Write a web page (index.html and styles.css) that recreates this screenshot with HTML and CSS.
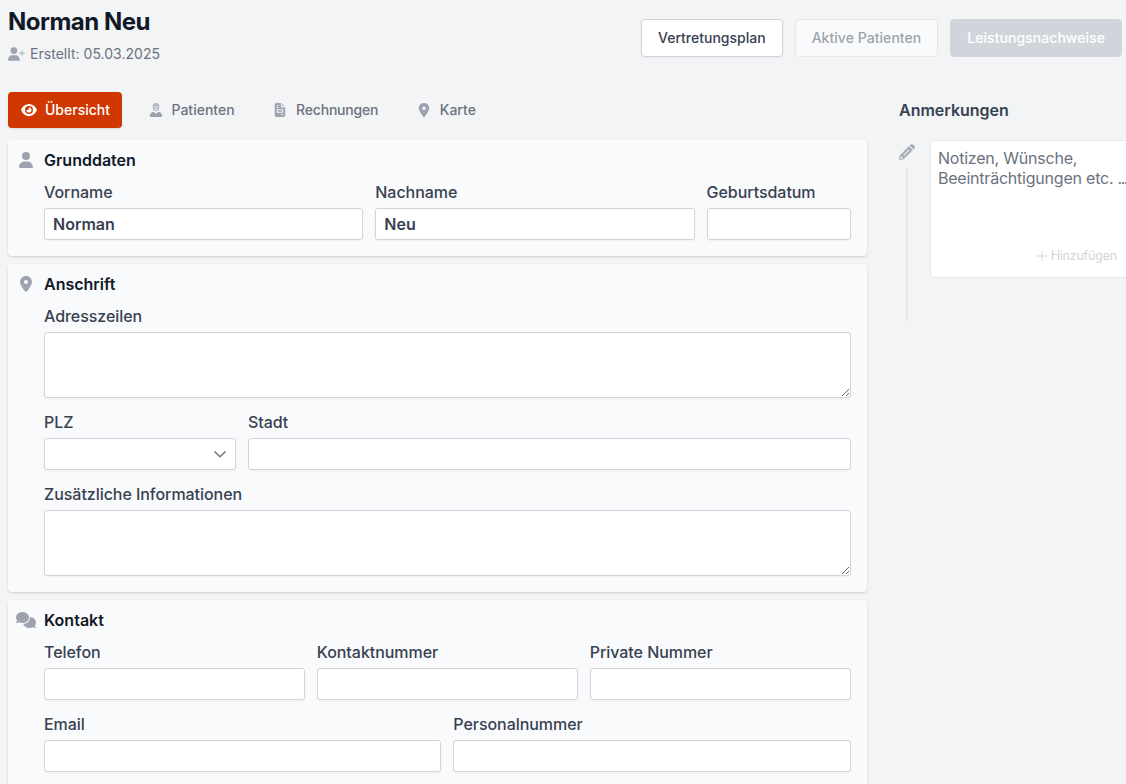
FILE: index.html
```html
<!DOCTYPE html>
<html lang="de">
<head>
  <meta charset="utf-8">
  <title>Norman Neu</title>
  <link rel="stylesheet" href="styles.css">
</head>
<body>

  <header class="header">
    <div>
      <h1>Norman Neu</h1>
      <div class="created">
        <svg width="17" height="14" viewBox="0 0 640 512"><path d="M96 128a128 128 0 1 1 256 0A128 128 0 1 1 96 128zM0 482.300C0 383.800 79.800 304 178.300 304l91.400 0C368.200 304 448 383.800 448 482.300c0 16.400-13.300 29.700-29.700 29.700L29.700 512C13.300 512 0 498.700 0 482.300z"/><path opacity=".7" d="M504 312l0-64-64 0c-13.300 0-24-10.700-24-24s10.700-24 24-24l64 0 0-64c0-13.300 10.700-24 24-24s24 10.700 24 24l0 64 64 0c13.300 0 24 10.700 24 24s-10.700 24-24 24l-64 0 0 64c0 13.300-10.700 24-24 24s-24-10.700-24-24z"/></svg>
        <span>Erstellt: 05.03.2025</span>
      </div>
    </div>
    <div class="actions">
      <button class="btn">Vertretungsplan</button>
      <button class="btn" disabled>Aktive Patienten</button>
      <button class="btn btn-primary" disabled>Leistungsnachweise</button>
    </div>
  </header>

  <div class="layout">
    <main>
      <nav class="tabs">
        <a class="tab active">
          <svg width="16" height="14" viewBox="0 0 576 512"><path d="M288 32c-80.800 0-145.500 36.800-192.600 80.600C48.600 156 17.300 208 2.500 243.700c-3.300 7.900-3.300 16.700 0 24.600C17.300 304 48.600 356 95.400 399.400C142.500 443.200 207.200 480 288 480s145.500-36.800 192.600-80.600c46.800-43.500 78.100-95.400 93-131.100c3.300-7.900 3.300-16.700 0-24.600c-14.900-35.700-46.200-87.700-93-131.100C433.500 68.800 368.800 32 288 32zM144 256a144 144 0 1 1 288 0 144 144 0 1 1-288 0zm144-64c0 35.300-28.700 64-64 64c-7.100 0-13.900-1.200-20.300-3.300c-5.500-1.800-11.900 1.600-11.700 7.400c.3 6.900 1.300 13.800 3.200 20.700c13.700 51.200 66.400 81.600 117.600 67.900s81.600-66.400 67.900-117.600c-11.100-41.500-47.800-69.400-88.600-71.100c-5.800-.2-9.200 6.100-7.400 11.700c2.100 6.400 3.300 13.200 3.300 20.300z"/></svg>
          Übersicht
        </a>
        <a class="tab">
          <svg width="16" height="14" viewBox="0 0 576 512"><g transform="translate(64)"><path opacity=".75" fill-rule="evenodd" d="M104 96C104 36 150 0 224 0s120 36 120 96v64a120 128 0 0 1-240 0zM150 124v32h148v-32zM166 200a58 52 0 0 0 116 0z"/><path d="M130 318l94 78 94-78c80 14 130 76 130 164 0 20-12 30-30 30H30c-18 0-30-10-30-30 0-88 50-150 130-164z"/></g></svg>
          Patienten
        </a>
        <a class="tab invoices">
          <svg width="16" height="14" viewBox="0 0 576 512"><g transform="translate(96)"><path fill-rule="evenodd" d="M64 0C28.700 0 0 28.700 0 64V448c0 35.300 28.700 64 64 64H320c35.300 0 64-28.700 64-64V160H256c-17.700 0-32-14.300-32-32V0H64zM64 80v26h96V80zM64 148v26h96v-26zM72 226v134h240V226zM112 262h160v62H112zM236 410v30h84v-30z"/><path opacity=".5" d="M256 0v128h128z"/></g></svg>
          Rechnungen
        </a>
        <a class="tab">
          <svg width="16" height="14" viewBox="0 0 576 512"><path transform="translate(96)" d="M215.700 499.200C267 435 384 279.400 384 192C384 86 298 0 192 0S0 86 0 192c0 87.400 117 243 168.300 307.200c12.300 15.300 35.100 15.300 47.400 0zM192 128a64 64 0 1 1 0 128 64 64 0 1 1 0-128z"/></svg>
          Karte
        </a>
      </nav>

      <section class="card">
        <svg class="card-icon" width="20" height="16" viewBox="0 0 640 512"><path transform="translate(96)" d="M224 256A128 128 0 1 0 224 0a128 128 0 1 0 0 256zm-45.700 48C79.800 304 0 383.800 0 482.300C0 498.700 13.300 512 29.700 512l388.600 0c16.400 0 29.700-13.300 29.700-29.700C448 383.800 368.200 304 269.700 304l-91.400 0z"/></svg>
        <div class="card-body">
          <h2>Grunddaten</h2>
          <div class="row">
            <label class="field">Vorname <input type="text" value="Norman"></label>
            <label class="field">Nachname <input type="text" value="Neu"></label>
            <label class="field date">Geburtsdatum <input type="text"></label>
          </div>
        </div>
      </section>

      <section class="card">
        <svg class="card-icon" width="20" height="16" viewBox="0 0 640 512"><path transform="translate(128)" d="M215.700 499.200C267 435 384 279.400 384 192C384 86 298 0 192 0S0 86 0 192c0 87.400 117 243 168.300 307.200c12.300 15.300 35.100 15.300 47.400 0zM192 128a64 64 0 1 1 0 128 64 64 0 1 1 0-128z"/></svg>
        <div class="card-body">
          <h2>Anschrift</h2>
          <div class="row">
            <label class="field">Adresszeilen <textarea></textarea></label>
          </div>
          <div class="row">
            <label class="field zip">PLZ
              <span class="select">
                <svg width="14" height="14" viewBox="0 0 14 14"><path d="M1.500 4.500L7 9.700l5.500-5.200"/></svg>
              </span>
            </label>
            <label class="field">Stadt <input type="text"></label>
          </div>
          <div class="row">
            <label class="field">Zusätzliche Informationen <textarea></textarea></label>
          </div>
        </div>
      </section>

      <section class="card">
        <svg class="card-icon" width="20" height="16" viewBox="0 0 640 512"><path d="M208 352c114.900 0 208-78.800 208-176S322.900 0 208 0S0 78.800 0 176c0 38.600 14.700 74.300 39.600 103.400c-3.500 9.400-8.700 17.700-14.200 24.700c-4.800 6.200-9.700 11-13.300 14.300c-1.800 1.600-3.300 2.900-4.300 3.700c-.5 .4-.9 .7-1.100 .8l-.2 .2C1 327.200-1.400 334.400 .8 340.900S9.100 352 16 352c21.800 0 43.800-5.600 62.100-12.500c9.200-3.500 17.800-7.400 25.200-11.400C134.100 343.300 169.800 352 208 352zM448 176c0 112.300-99.100 196.900-216.500 207C255.800 457.400 336.400 512 432 512c38.200 0 73.900-8.700 104.700-23.900c7.500 4 16 7.900 25.200 11.400c18.300 6.900 40.300 12.500 62.100 12.500c6.900 0 13.100-4.500 15.200-11.100c2.100-6.600-.2-13.800-5.800-17.900l-.2-.2c-.2-.2-.6-.4-1.100-.8c-1-.8-2.500-2-4.300-3.700c-3.600-3.300-8.500-8.100-13.300-14.300c-5.500-7-10.700-15.400-14.200-24.700c24.900-29 39.600-64.700 39.600-103.400c0-92.800-84.900-168.900-192.600-175.500c.4 5.100 .6 10.300 .6 15.500z"/></svg>
        <div class="card-body">
          <h2>Kontakt</h2>
          <div class="row">
            <label class="field">Telefon <input type="text"></label>
            <label class="field">Kontaktnummer <input type="text"></label>
            <label class="field">Private Nummer <input type="text"></label>
          </div>
          <div class="row">
            <label class="field">Email <input type="text"></label>
            <label class="field">Personalnummer <input type="text"></label>
          </div>
        </div>
      </section>
    </main>

    <aside class="notes">
      <h3>Anmerkungen</h3>
      <div class="note">
        <div class="timeline">
          <svg width="16" height="16" viewBox="0 0 512 512"><path opacity=".85" fill-rule="evenodd" d="M36 353L322 66l124 124L159 476c-6 6-13 11-21 13L30 511c-18 4-33-11-29-29L22 374c2-8 7-15 14-21zM150 346l20 20 160-160-20-20zM60 400l-16 68 68-16-4-48z"/><path d="M345 43l17-18c25-25 66-25 91 0l34 34c25 25 25 66 0 91l-18 17z"/></svg>
          <div class="line"></div>
        </div>
        <div class="note-box">
          <p>Notizen, Wünsche,<br>Beeinträchtigungen etc. <span class="dots">...</span></p>
          <div class="add">
            <svg width="10" height="10" viewBox="0 0 10 10"><path d="M5 0v10M0 5h10"/></svg>
            Hinzufügen
          </div>
        </div>
      </div>
    </aside>
  </div>

</body>
</html>
```
FILE: styles.css
```css
* {
  box-sizing: border-box;
}

body {
  margin: 0;
  height: 784px;
  padding: 0 4px 0 8px;
  overflow: hidden;
  background: #f3f4f6;
  color: #374151;
  font-family: Inter, sans-serif;
  font-size: 16px;
  line-height: 24px;
}

svg {
  display: block;
  flex-shrink: 0;
  fill: #9ca3af;
}

h1, h2, h3, p {
  margin: 0;
}

h1 {
  font-size: 24px;
  line-height: 32px;
  font-weight: 700;
  letter-spacing: -0.5px;
  color: #111827;
}

/* Header */
.header {
  display: flex;
  justify-content: space-between;
  height: 92px;
  padding-top: 6px;
}

.created {
  display: flex;
  align-items: center;
  gap: 5px;
  margin-top: 6px;
  font-size: 14px;
  line-height: 20px;
  letter-spacing: 0.03px;
  color: #6b7280;
}

.actions {
  display: flex;
  align-items: flex-start;
  gap: 12px;
  padding-top: 13px;
}

.btn {
  height: 38px;
  padding: 0 16px;
  border: 1px solid #d1d5db;
  border-radius: 4px;
  background: white;
  color: #374151;
  font: 500 14px/20px Inter, sans-serif;
  box-shadow: 0 1px 2px rgba(0, 0, 0, 0.05);
}

.btn:disabled {
  border-color: #e5e7eb;
  background: #f9fafb;
  color: #9ca3af;
  letter-spacing: 0.05px;
  box-shadow: none;
}

.btn-primary:disabled {
  border-color: #d1d5db;
  background: #d1d5db;
  color: white;
}

.layout {
  display: flex;
  gap: 32.4px;
}

main {
  width: 858.6px;
  flex-shrink: 0;
}

/* Tabs */
.tabs {
  display: flex;
  gap: 12.5px;
  margin-bottom: 12px;
}

.tab {
  display: flex;
  align-items: center;
  gap: 8px;
  height: 36px;
  padding: 0 12px 0 13px;
  border-radius: 4px;
  font-size: 14px;
  font-weight: 500;
  color: #6b7280;
}

.tab.invoices {
  letter-spacing: -0.2px;
}

.tab.active {
  background: #d03801;
  color: white;
  box-shadow: 0 1px 2px rgba(0, 0, 0, 0.1);
}

.tab.active svg {
  fill: white;
}

/* Cards */
.card {
  display: flex;
  gap: 8px;
  margin-bottom: 8px;
  padding: 8px 16px 16px 8px;
  border-radius: 4px;
  background: #f9fafb;
  box-shadow: 0 1px 3px rgba(0, 0, 0, 0.1), 0 1px 2px rgba(0, 0, 0, 0.06);
}

.card-icon {
  margin-top: 4px;
}

.card-body {
  flex: 1;
}

h2 {
  margin-bottom: 8px;
  font-size: 16px;
  font-weight: 600;
  color: #111827;
}

.row {
  display: flex;
  gap: 12px;
}

.row + .row {
  margin-top: 12px;
}

.field {
  flex: 1 1 0;
  min-width: 0;
  font-weight: 500;
  letter-spacing: -0.05px;
}

.field.date {
  flex: 0 0 144px;
}

.field.zip {
  flex: 0 0 192px;
}

input, textarea, .select {
  display: block;
  width: 100%;
  height: 32px;
  margin-top: 4px;
  padding: 0 8px;
  border: 1px solid #d1d5db;
  border-radius: 3px;
  background: white;
  color: #374151;
  font: 600 16px/24px Inter, sans-serif;
  box-shadow: 0 1px 2px rgba(0, 0, 0, 0.05);
}

textarea {
  height: 66px;
}

.select {
  display: flex;
  align-items: center;
  justify-content: flex-end;
}

.select svg {
  fill: none;
  stroke: #6b7280;
  stroke-width: 1.5;
}

/* Notes */
.notes h3 {
  font-size: 16px;
  line-height: 36px;
  font-weight: 600;
  margin-bottom: 12px;
}

.note {
  display: flex;
  gap: 15px;
}

.timeline {
  width: 16px;
  padding-top: 4px;
}

.line {
  width: 2px;
  height: 153px;
  margin: 8px auto 0;
  background: #e5e7eb;
}

.note-box {
  display: flex;
  flex-direction: column;
  justify-content: space-between;
  width: 204px;
  height: 138px;
  padding: 7px;
  border: 1px solid #e5e7eb;
  border-radius: 4px;
  background: white;
  color: #6b7280;
  line-height: 20px;
}

.note-box p {
  letter-spacing: -0.22px;
  white-space: nowrap;
}

.dots {
  letter-spacing: -1.5px;
}

.add {
  display: flex;
  align-items: center;
  justify-content: flex-end;
  gap: 4px;
  padding: 0 9px 4px 0;
  font-size: 12.500px;
  letter-spacing: -0.2px;
  color: #d1d5db;
}

.add svg {
  stroke: #d1d5db;
}
```
